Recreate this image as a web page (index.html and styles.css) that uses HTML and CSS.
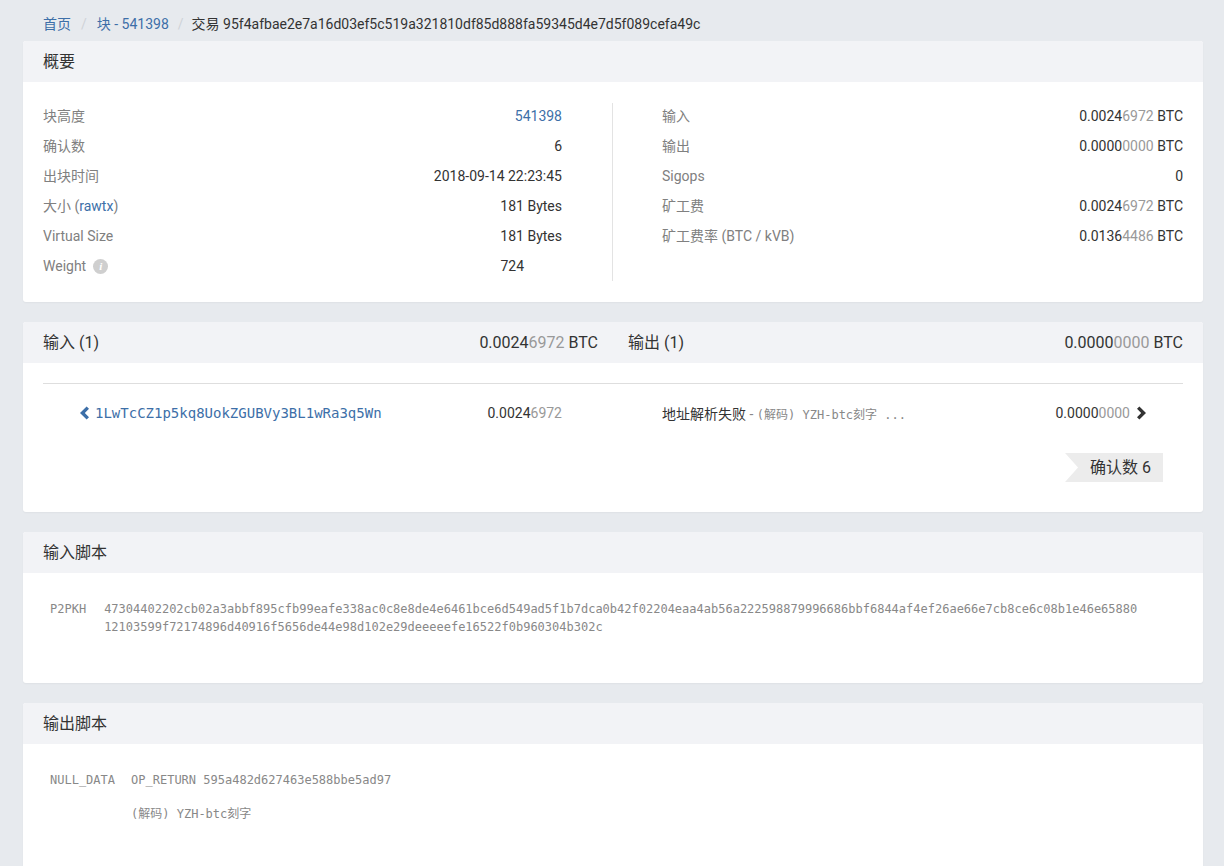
FILE: index.html
```html
<!DOCTYPE html>
<html lang="zh">
<head>
<meta charset="utf-8">
<title>交易 95f4afbae2e7a16d03ef5c519a321810df85d888fa59345d4e7d5f089cefa49c</title>
<link rel="stylesheet" href="styles.css">
</head>
<body>
<div class="page">
  <nav class="crumbs">
    <a class="crumb-link" href="#">首页</a><span class="sep">/</span><a class="crumb-link" href="#">块 - 541398</a><span class="sep sep-2">/</span><span class="crumb-cur">交易 95f4afbae2e7a16d03ef5c519a321810df85d888fa59345d4e7d5f089cefa49c</span>
  </nav>

  <section class="card">
    <div class="card-head">概要</div>
    <div class="overview">
      <div class="ov-col">
        <div class="ov-row"><span class="lbl">块高度</span><a class="link" href="#">541398</a></div>
        <div class="ov-row"><span class="lbl">确认数</span><span class="val">6</span></div>
        <div class="ov-row"><span class="lbl">出块时间</span><span class="val">2018-09-14 22:23:45</span></div>
        <div class="ov-row"><span class="lbl">大小 (<a class="link" href="#">rawtx</a>)</span><span class="val">181 Bytes</span></div>
        <div class="ov-row"><span class="lbl">Virtual Size</span><span class="val">181 Bytes</span></div>
        <div class="ov-row"><span class="lbl">Weight <span class="info">i</span></span><span class="val val-mid">724</span></div>
      </div>
      <div class="ov-divider"></div>
      <div class="ov-col ov-col-right">
        <div class="ov-row"><span class="lbl">输入</span><span class="val">0.0024<span class="dim">6972</span> BTC</span></div>
        <div class="ov-row"><span class="lbl">输出</span><span class="val">0.0000<span class="dim">0000</span> BTC</span></div>
        <div class="ov-row"><span class="lbl">Sigops</span><span class="val">0</span></div>
        <div class="ov-row"><span class="lbl">矿工费</span><span class="val">0.0024<span class="dim">6972</span> BTC</span></div>
        <div class="ov-row"><span class="lbl">矿工费率 (BTC / kVB)</span><span class="val">0.0136<span class="dim">4486</span> BTC</span></div>
      </div>
    </div>
  </section>

  <section class="card">
    <div class="card-head io-head">
      <div class="io-half"><span>输入 (1)</span><span>0.0024<span class="dim">6972</span> BTC</span></div>
      <div class="io-half"><span>输出 (1)</span><span>0.0000<span class="dim">0000</span> BTC</span></div>
    </div>
    <div class="io-body">
      <div class="io-rule"></div>
      <div class="io-rows">
        <div class="io-in">
          <a class="addr" href="#"><svg class="chev" viewBox="0 0 10 14" width="10" height="14"><path d="M7.6 0.4 L10 2.8 L5.8 7 L10 11.2 L7.6 13.6 L1 7 Z" fill="#3d6fa8"/></svg><span class="mono-addr">1LwTcCZ1p5kq8UokZGUBVy3BL1wRa3q5Wn</span></a>
          <span class="amt">0.0024<span class="dim">6972</span></span>
        </div>
        <div class="io-out">
          <span class="out-addr">地址解析失败 <span class="dash">-</span> <span class="mono-sm">(解码) YZH-btc刻字 ...</span></span>
          <span class="amt-wrap"><span class="amt">0.0000<span class="dim">0000</span></span><svg class="chev" viewBox="0 0 10 14" width="10" height="14"><path d="M2.4 0.4 L0 2.8 L4.2 7 L0 11.2 L2.4 13.6 L9 7 Z" fill="#333"/></svg></span>
        </div>
      </div>
      <div class="badge-row"><span class="badge">确认数 6</span></div>
    </div>
  </section>

  <section class="card">
    <div class="card-head">输入脚本</div>
    <div class="script-body">
      <div class="script-row gap-in">
        <span class="script-type">P2PKH</span>
        <div class="script-data">
          <div>47304402202cb02a3abbf895cfb99eafe338ac0c8e8de4e6461bce6d549ad5f1b7dca0b42f02204eaa4ab56a222598879996686bbf6844af4ef26ae66e7cb8ce6c08b1e46e65880</div>
          <div>12103599f72174896d40916f5656de44e98d102e29deeeeefe16522f0b960304b302c</div>
        </div>
      </div>
    </div>
  </section>

  <section class="card card-last">
    <div class="card-head">输出脚本</div>
    <div class="script-body out-script">
      <div class="script-row gap-out">
        <span class="script-type">NULL_DATA</span>
        <div class="script-data">
          <div>OP_RETURN 595a482d627463e588bbe5ad97</div>
          <div class="decoded">(解码) YZH-btc刻字</div>
        </div>
      </div>
    </div>
  </section>
</div>
</body>
</html>
```

FILE: styles.css
```css
* { box-sizing: border-box; }
html, body { margin: 0; padding: 0; }
body {
  background: #e7eaee;
  font-family: Roboto, "Noto Sans CJK SC", sans-serif;
  font-size: 14px;
  color: #333;
}
a { text-decoration: none; }
.page {
  padding: 0 21px 0 23px;
}
.crumbs {
  height: 41px;
  padding-top: 15px;
  line-height: 18px;
  padding-left: 20px;
  white-space: nowrap;
}
.crumb-link { color: #3d6fa8; }
.sep { color: #cfd3d8; padding: 0 10px; }
.sep-2 { padding: 0 8px 0 9px; }
.crumb-cur { color: #333; }

.card {
  background: #fff;
  border-radius: 3px;
  margin-bottom: 20px;
  box-shadow: 0 1px 2px rgba(0,0,0,0.04);
  overflow: hidden;
}
.card-head {
  height: 41px;
  line-height: 41px;
  background: #f2f3f6;
  padding: 0 20px;
  font-size: 16px;
  color: #333;
}

/* overview */
.overview {
  display: grid;
  grid-template-columns: 519px 1px 1fr;
  column-gap: 50px;
  padding: 19px 20px 21px;
}
.ov-col-right { margin-left: -1px; }
.ov-divider { background: #e3e3e3; margin: 2px 0 0; }
.ov-row {
  display: flex;
  justify-content: space-between;
  align-items: center;
  height: 30px;
  line-height: 30px;
}
.lbl { color: #808080; display: inline-flex; align-items: center; }
.val { color: #333; }
.val-mid { margin-right: 38px; }
.link { color: #3d6fa8; }
.dim { color: #999; }
.info {
  display: inline-flex;
  align-items: center;
  justify-content: center;
  width: 15px;
  height: 15px;
  border-radius: 50%;
  background: #cfcfcf;
  color: #fff;
  font-family: "Liberation Serif", serif;
  font-style: italic;
  font-weight: bold;
  font-size: 11px;
  line-height: 15px;
  margin-left: 7px;
}

/* inputs / outputs */
.io-head {
  display: grid;
  grid-template-columns: 1fr 1fr;
  column-gap: 30px;
}
.io-half {
  display: flex;
  justify-content: space-between;
}
.io-body { padding: 20px 20px 30px; }
.io-rule { border-top: 1px solid #dedede; }
.io-rows {
  display: grid;
  grid-template-columns: 519px 1fr;
  column-gap: 100px;
  margin-top: 14px;
}
.io-in, .io-out {
  display: flex;
  justify-content: space-between;
  align-items: center;
  height: 30px;
}
.io-in { padding-left: 36px; }
.io-out { padding-right: 36px; }
.addr { display: inline-flex; align-items: center; gap: 6px; color: #3d6fa8; }
.chev { display: block; }
.mono-addr {
  font-family: "DejaVu Sans Mono", monospace;
  font-size: 14px;
  color: #3d6fa8;
}
.amt { color: #333; }
.amt-wrap { display: inline-flex; align-items: center; gap: 7px; }
.out-addr { color: #333; }
.dash { color: #888; }
.mono-sm {
  font-family: "DejaVu Sans Mono", "Noto Sans CJK SC", monospace;
  font-size: 12px;
  color: #888;
}
.badge-row {
  display: flex;
  justify-content: flex-end;
  margin-top: 25px;
  padding-right: 20px;
}
.badge {
  display: inline-block;
  height: 29px;
  line-height: 29px;
  font-size: 16px;
  padding: 0 12px 0 25px;
  background: #ececec;
  color: #333;
  clip-path: polygon(0 0, 100% 0, 100% 100%, 0 100%, 13px 50%);
}

/* scripts */
.script-body {
  padding: 27px 27px 47px;
}
.script-row { display: flex; align-items: flex-start; }
.gap-in { gap: 18px; }
.gap-out { gap: 16px; }
.script-type, .script-data {
  font-family: "DejaVu Sans Mono", "Noto Sans CJK SC", monospace;
  font-size: 12px;
  line-height: 18px;
  color: #888;
  white-space: nowrap;
}
.decoded { margin-top: 16px; }
.out-script { padding-bottom: 60px; }
.card-last { margin-bottom: 0; }
```
